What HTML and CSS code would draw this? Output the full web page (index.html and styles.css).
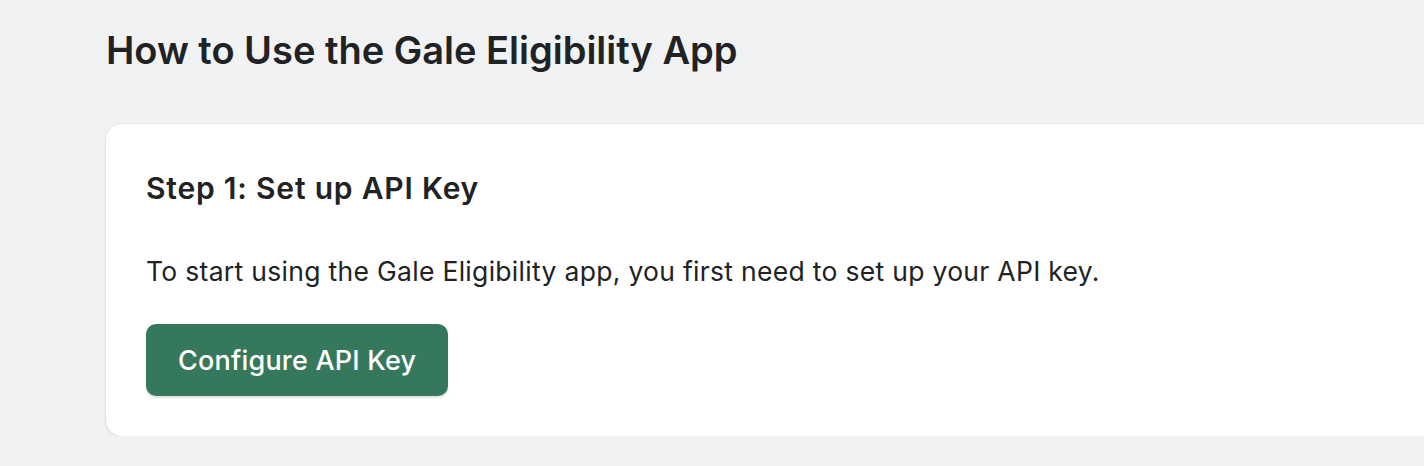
FILE: index.html
```html
<!DOCTYPE html>
<html lang="en">
<head>
<meta charset="utf-8">
<title>How to Use the Gale Eligibility App</title>
<link rel="stylesheet" href="styles.css">
</head>
<body>
<main class="page">
  <h1 class="page-title">How to Use the Gale Eligibility App</h1>
  <section class="card">
    <h2 class="card-title">Step 1: Set up API Key</h2>
    <p class="card-text">To start using the Gale Eligibility app, you first need to set up your API key.</p>
    <button class="btn-primary" type="button">Configure API Key</button>
  </section>
</main>
</body>
</html>
```

FILE: styles.css
```css
html, body {
  margin: 0;
  padding: 0;
  overflow: hidden;
}
body {
  background: #f1f2f4;
  font-family: Inter, "Noto Sans", "Liberation Sans", sans-serif;
  color: #202223;
}
.page {
  padding: 24px 0 0 106px;
}
.page-title {
  margin: 0;
  font-size: 38px;
  line-height: 52px;
  font-weight: 600;
  letter-spacing: 0;
}
.card {
  margin-top: 48px;
  width: 1400px;
  background: #ffffff;
  border-radius: 16px;
  box-shadow: 0 2px 4px rgba(0,0,0,0.08), 0 0 0 1px rgba(0,0,0,0.03);
  padding: 44px 40px 40px 40px;
  box-sizing: border-box;
}
.card-title {
  margin: 0;
  font-size: 30px;
  line-height: 40px;
  font-weight: 600;
  letter-spacing: 0.8px;
}
.card-text {
  margin: 43px 0 0;
  font-size: 26.5px;
  line-height: 40px;
  font-weight: 400;
  letter-spacing: 0.3px;
}
.btn-primary {
  margin-top: 33px;
  display: inline-block;
  height: 72px;
  padding: 0 32px;
  border: none;
  border-radius: 10px;
  background: #36785c;
  color: #ffffff;
  font-family: inherit;
  font-size: 27px;
  font-weight: 500;
  letter-spacing: 0.2px;
  box-shadow: 0 2px 2px rgba(0,0,0,0.12);
}
```
